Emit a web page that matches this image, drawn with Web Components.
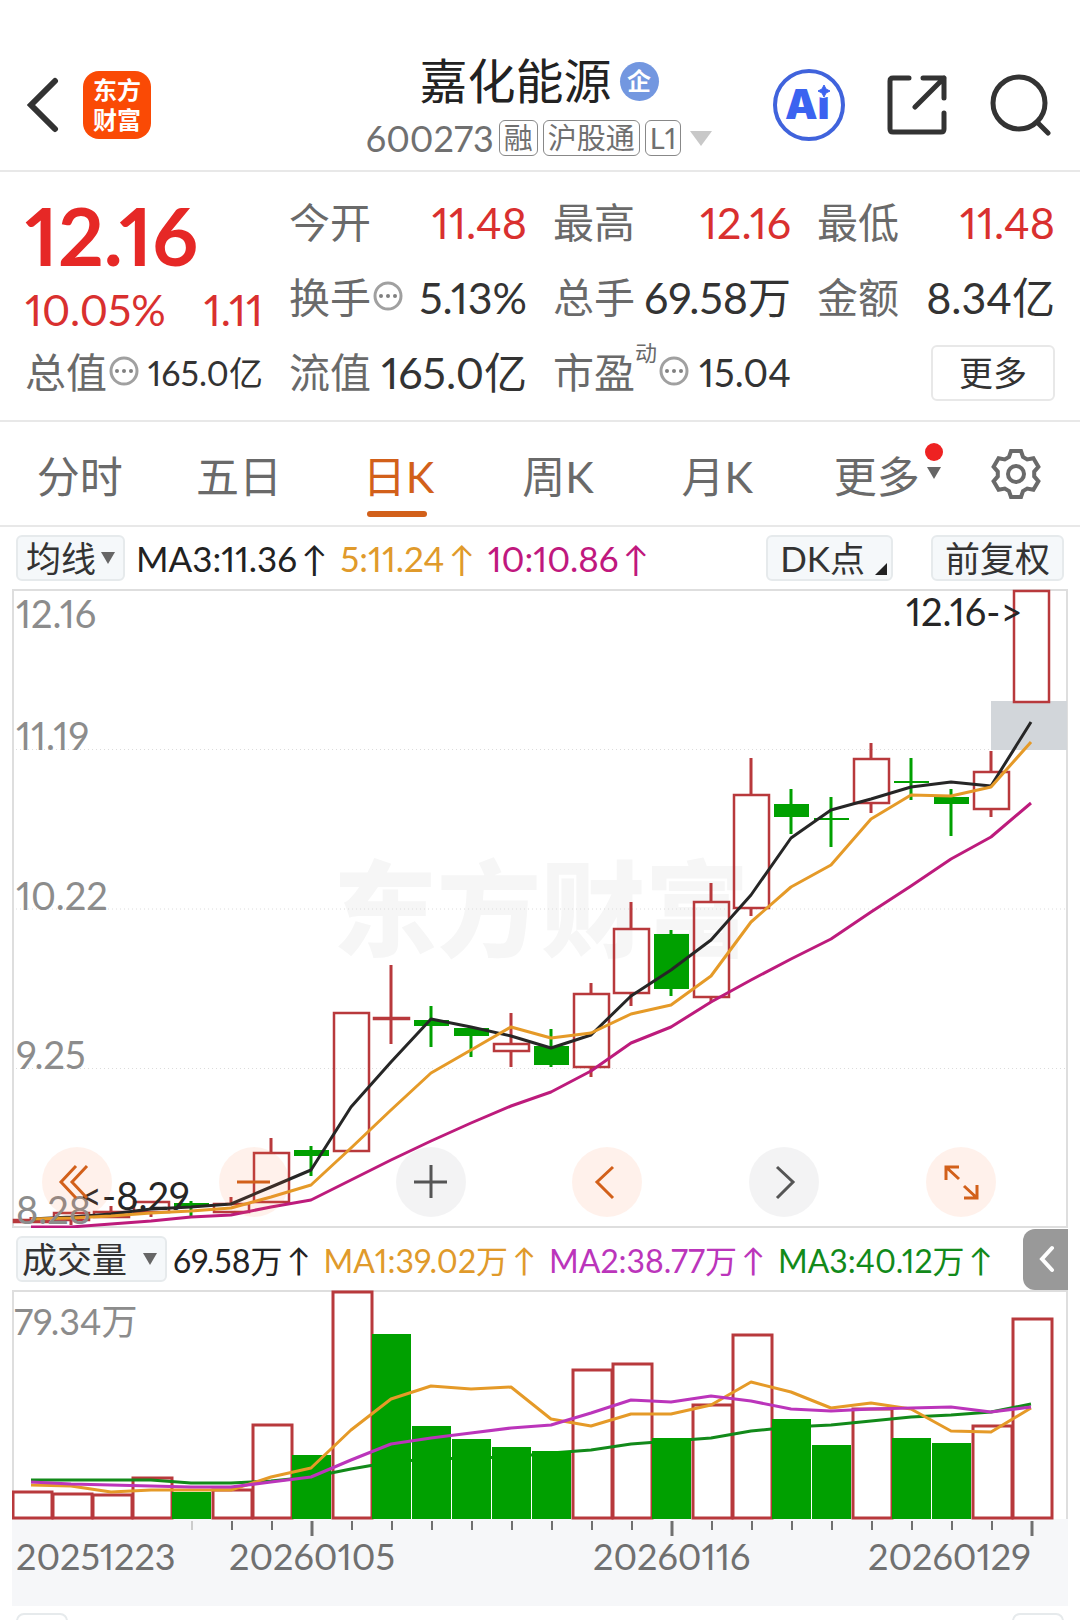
<!DOCTYPE html>
<html lang="zh-CN">
<head>
<meta charset="utf-8">
<meta name="viewport" content="width=device-width, initial-scale=1">
<title>嘉化能源 600273</title>
<style>
    body {
        margin: 0;
        background: #fff;
        color: #333;
        font-family: Lato, "Noto Sans CJK SC", sans-serif;
        font-feature-settings: "pnum";
    }
</style>
</head>
<body>
<stock-page></stock-page>

<script>
const RESET = `
    *, *::before, *::after { box-sizing: border-box; }
    button { margin: 0; padding: 0; border: 0; background: none; color: inherit; font: inherit; font-feature-settings: inherit; cursor: pointer; }
    a { color: inherit; text-decoration: none; }
    svg { display: block; flex: none; }
`;

class StockHeader extends HTMLElement {
    constructor() {
        super();
        this.attachShadow({ mode: 'open' });
    }

    connectedCallback() {
        this.shadowRoot.innerHTML = `
            <style>
                ${RESET}
                :host { display: block; border-bottom: 2px solid #e8e8e8; }
                header {
                    display: grid;
                    grid-template-columns: 1fr auto 1fr;
                    align-items: center;
                    height: 170px;
                    padding: 40px 29px 0 27px;
                }
                .left, .right, .name, .code { display: flex; align-items: center; }
                .left { gap: 24px; }
                .right { justify-content: flex-end; gap: 42px; }
                .logo {
                    width: 68px;
                    padding: 4px 0;
                    border-radius: 16px;
                    background: #fa4a05;
                    color: #fff;
                    font-size: 24px;
                    font-weight: 700;
                    line-height: 30px;
                    text-align: center;
                }
                .stock { padding-top: 8px; }
                h1 { margin: 0; font-size: 48px; font-weight: 400; line-height: 58px; color: #222; }
                .name { justify-content: center; gap: 8px; }
                .corp {
                    width: 39px;
                    height: 39px;
                    border-radius: 50%;
                    background: #7397e0;
                    color: #fff;
                    font-size: 24px;
                    font-weight: 700;
                    line-height: 38px;
                    text-align: center;
                }
                .code { gap: 5px; color: #707070; font-size: 36px; line-height: 56px; }
                .tag {
                    height: 36px;
                    padding: 0 4px;
                    border: 1px solid #888;
                    border-radius: 6px;
                    font-size: 29px;
                    line-height: 33px;
                }
                .code svg { margin-left: 4px; }
            </style>
            <header>
                <div class="left">
                    <a href="#back" aria-label="返回">
                        <svg width="32" height="56" viewBox="0 0 32 56" fill="none" stroke="#333" stroke-width="6" stroke-linecap="round"><path d="M28 4L4 28l24 24"/></svg>
                    </a>
                    <div class="logo">东方<br>财富</div>
                </div>
                <div class="stock">
                    <div class="name"><h1>嘉化能源</h1><span class="corp">企</span></div>
                    <div class="code">
                        <span>600273</span>
                        <span class="tag">融</span><span class="tag">沪股通</span><span class="tag">L1</span>
                        <svg width="22" height="15" viewBox="0 0 22 15"><path d="M0 0h22L11 15z" fill="#c8c8c8"/></svg>
                    </div>
                </div>
                <div class="right">
                    <button aria-label="AI">
                        <svg width="72" height="72" viewBox="0 0 72 72">
                            <circle cx="36" cy="36" r="34" fill="#fff" stroke="#4063dc" stroke-width="4"/>
                            <text x="12" y="50" font-family="Inter" font-size="41" font-weight="900" fill="#3b63f0">Ai</text>
                            <circle cx="50" cy="20" r="9" fill="#fff"/>
                            <path d="M51 16l2 4 4 2-4 2-2 4-2-4-4-2 4-2z" fill="#3b63f0" stroke="#3b63f0"/>
                        </svg>
                    </button>
                    <button aria-label="分享">
                        <svg width="60" height="60" viewBox="0 0 60 60" fill="none" stroke="#333" stroke-width="5" stroke-linecap="round" stroke-linejoin="round"><path d="M22 3H6q-3 0-3 3v48q0 3 3 3h48q3 0 3-3V38M36 3h21v20M57 3L28 32"/></svg>
                    </button>
                    <button aria-label="搜索">
                        <svg width="62" height="62" viewBox="0 0 62 62" fill="none" stroke="#333" stroke-width="5" stroke-linecap="round"><circle cx="30" cy="29" r="26"/><path d="M48 48l11 11"/></svg>
                    </button>
                </div>
            </header>
        `;
    }
}

class QuoteCell extends HTMLElement {
    constructor() {
        super();
        this.attachShadow({ mode: 'open' });
    }

    connectedCallback() {
        const note = this.getAttribute('note');
        this.shadowRoot.innerHTML = `
            <style>
                ${RESET}
                :host { display: flex; align-items: center; justify-content: space-between; height: 75px; white-space: nowrap; font-size: 43px; line-height: 75px; }
                :host([size="small"]) .value { font-size: 34px; }
                :host([size="medium"]) .value { font-size: 38px; }
                :host([up]) .value { color: #d9302f; }
                .label { display: flex; align-items: center; color: #6a6a6a; font-size: 41px; }
                .label svg { margin: 0 0 4px 2px; }
                sup { align-self: flex-start; font-size: 22px; line-height: 36px; }
            </style>
            <span class="label">
                <span>${this.getAttribute('label')}</span>
                ${note ? `<sup>${note}</sup>` : ''}
                ${this.hasAttribute('tip') ? `
                    <svg width="30" height="30" viewBox="0 0 30 30">
                        <circle cx="15" cy="15" r="13" fill="none" stroke="#a0a0a0" stroke-width="3"/>
                        <g fill="#808080"><circle cx="8" cy="15" r="2"/><circle cx="15" cy="15" r="2"/><circle cx="22" cy="15" r="2"/></g>
                    </svg>` : ''}
            </span>
            <span class="value"><slot></slot></span>
        `;
    }
}

class QuotePanel extends HTMLElement {
    constructor() {
        super();
        this.attachShadow({ mode: 'open' });
    }

    connectedCallback() {
        this.shadowRoot.innerHTML = `
            <style>
                ${RESET}
                :host { display: block; padding: 13px 25px 10px; border-bottom: 2px solid #e8e8e8; }
                .grid { display: grid; grid-template-columns: repeat(4, minmax(0, 1fr)); column-gap: 26px; }
                .last { grid-row: span 2; color: #d9302f; }
                .price { color: #e62826; font-size: 80px; font-weight: 700; line-height: 100px; }
                .change { display: flex; justify-content: space-between; font-size: 43px; line-height: 50px; }
                .more { align-self: center; justify-self: end; width: 124px; height: 56px; border: 2px solid #e8e8e8; border-radius: 6px; font-size: 34px; line-height: 50px; }
            </style>
            <div class="grid">
                <div class="last">
                    <div class="price">12.16</div>
                    <div class="change"><span>10.05%</span><span>1.11</span></div>
                </div>
                <quote-cell label="今开" up>11.48</quote-cell>
                <quote-cell label="最高" up>12.16</quote-cell>
                <quote-cell label="最低" up>11.48</quote-cell>
                <quote-cell label="换手" tip>5.13%</quote-cell>
                <quote-cell label="总手">69.58万</quote-cell>
                <quote-cell label="金额">8.34亿</quote-cell>
                <quote-cell label="总值" tip size="small">165.0亿</quote-cell>
                <quote-cell label="流值">165.0亿</quote-cell>
                <quote-cell label="市盈" note="动" tip size="medium">15.04</quote-cell>
                <button class="more">更多</button>
            </div>
        `;
    }
}

class PeriodTabs extends HTMLElement {
    constructor() {
        super();
        this.attachShadow({ mode: 'open' });
        this.state = { active: '日K' };
    }

    connectedCallback() {
        this.render();
    }

    render() {
        const tabs = ['分时', '五日', '日K', '周K', '月K'];
        this.shadowRoot.innerHTML = `
            <style>
                ${RESET}
                :host { display: block; border-bottom: 2px solid #e8e8e8; }
                nav { display: grid; grid-template-columns: repeat(6, 4fr) 3fr; height: 103px; padding-right: 4px; align-items: stretch; color: #6a6a6a; font-size: 43px; }
                button { position: relative; display: flex; align-items: center; justify-content: center; }
                .tab.active { color: #d2601a; }
                .tab.active::after { content: ""; position: absolute; left: 50%; bottom: 8px; width: 60px; height: 6px; margin-left: -32px; border-radius: 3px; background: #d2601a; }
                .marks { position: absolute; left: 50%; top: 21px; margin-left: 48px; display: flex; flex-direction: column; align-items: center; gap: 6px; }
            </style>
            <nav>
                ${tabs.map(t => `<button class="tab ${t === this.state.active ? 'active' : ''}" data-tab="${t}">${t}</button>`).join('')}
                <button>更多
                    <span class="marks">
                        <svg width="18" height="18" viewBox="0 0 18 18"><circle cx="9" cy="9" r="9" fill="#ee2222"/></svg>
                        <svg width="14" height="12" viewBox="0 0 14 12"><path d="M0 0h14L7 12z" fill="#666"/></svg>
                    </span>
                </button>
                <button aria-label="设置">
                    <svg width="52" height="52" viewBox="-26 -26 52 52" fill="none" stroke="#6a6a6a" stroke-width="4">
                        <path d="M-7-17L-5-23H5L7-17 11.2-14.6 17.4-15.8 22.4-7.2 18.2-2.4V2.4L22.4 7.2 17.4 15.8 11.2 14.6 7 17 5 23H-5L-7 17-11.2 14.6-17.4 15.8-22.4 7.2-18.2 2.4V-2.4L-22.4-7.2-17.4-15.8-11.2-14.6z"/>
                        <circle r="8"/>
                    </svg>
                </button>
            </nav>
        `;
        this.shadowRoot.querySelectorAll('.tab').forEach(tab => {
            tab.addEventListener('click', () => {
                this.state.active = tab.dataset.tab;
                this.render();
            });
        });
    }
}

class ChipButton extends HTMLElement {
    constructor() {
        super();
        this.attachShadow({ mode: 'open' });
    }

    connectedCallback() {
        const mark = this.getAttribute('mark');
        this.shadowRoot.innerHTML = `
            <style>
                ${RESET}
                :host { display: block; flex: none; }
                button { display: flex; align-items: center; gap: 5px; height: 46px; padding: 0 8px; border: 2px solid #e6eaec; border-radius: 6px; background: #f5f8fa; color: #333; font-size: 35px; line-height: 42px; white-space: nowrap; }
                :host([wide]) button { gap: 16px; padding: 0 8px 0 4px; }
                :host([roomy]) button { padding: 0 12px; }
                :host([mark="corner"]) button { gap: 10px; padding: 0 4px 0 12px; }
                .corner { align-self: flex-end; margin-bottom: 4px; }
            </style>
            <button>
                <slot></slot>
                ${mark === 'down' ? '<svg width="14" height="12" viewBox="0 0 14 12"><path d="M0 0h14L7 12z" fill="#666"/></svg>' : ''}
                ${mark === 'corner' ? '<svg class="corner" width="12" height="12" viewBox="0 0 12 12"><path d="M12 0v12H0z" fill="#222"/></svg>' : ''}
            </button>
        `;
    }
}

class LegendItem extends HTMLElement {
    constructor() {
        super();
        this.attachShadow({ mode: 'open' });
    }

    connectedCallback() {
        this.shadowRoot.innerHTML = `
            <style>
                :host { display: flex; align-items: center; gap: 4px; flex: none; white-space: nowrap; color: var(--line, #222); }
            </style>
            <span><slot></slot></span><span>↑</span>
        `;
    }
}

// Day k sits at x = 31 + 40k; prices and volumes below are canvas y values.
const X0 = 31;
const STEP = 40;
const RED = '#b8393c';
const GREEN = '#00a000';

// [up, high, body top, body bottom, low, volume top]
const DAYS = [
    [1, 1217, 1220, 1222, 1223, 1492],
    [1, 1213, 1213, 1220, 1225, 1494],
    [1, 1206, 1212, 1217, 1217, 1495],
    [1, 1202, 1202, 1212, 1217, 1478],
    [0, 1201, 1203, 1207, 1217, 1492],
    [1, 1197, 1204, 1212, 1212, 1490],
    [1, 1138, 1153, 1202, 1202, 1425],
    [0, 1146, 1150, 1156, 1176, 1455],
    [1, 1013, 1013, 1151, 1151, 1292],
    [1, 965, 1018, 1019, 1044, 1334],
    [0, 1006, 1020, 1026, 1047, 1426],
    [0, 1028, 1028, 1036, 1057, 1439],
    [1, 1013, 1044, 1051, 1067, 1447],
    [0, 1029, 1046, 1065, 1067, 1451],
    [1, 983, 994, 1067, 1077, 1370],
    [1, 902, 929, 993, 1006, 1364],
    [0, 930, 934, 989, 996, 1438],
    [1, 883, 902, 997, 1002, 1405],
    [1, 758, 795, 908, 916, 1335],
    [0, 789, 804, 817, 834, 1419],
    [0, 797, 818, 820, 847, 1445],
    [1, 743, 759, 803, 813, 1409],
    [0, 758, 781, 783, 800, 1438],
    [0, 789, 797, 804, 836, 1443],
    [1, 751, 772, 809, 817, 1426],
    [1, 590, 591, 702, 702, 1319]
];
const FALLING_VOLUME = [4, 7, 9, 10, 11, 12, 13, 16, 19, 20, 22, 23];

const PRICE_LINES = [
    ['#262626', [1219, 1217, 1214, 1209, 1207, 1204, 1187, 1170, 1107, 1062, 1019, 1027, 1036, 1048, 1035, 996, 970, 940, 895, 838, 810, 799, 787, 782, 786, 722]],
    ['#e59a28', [1219, 1218, 1216, 1213, 1211, 1208, 1197, 1185, 1148, 1110, 1073, 1050, 1027, 1038, 1033, 1014, 1005, 976, 922, 887, 865, 819, 795, 796, 787, 742]],
    ['#bd1b7c', [1227, 1227, 1224, 1221, 1217, 1215, 1207, 1200, 1180, 1160, 1141, 1123, 1106, 1092, 1071, 1043, 1027, 1002, 980, 959, 939, 912, 886, 859, 837, 803]]
];
const VOLUME_LINES = [
    ['#e59a28', [1485, 1486, 1492, 1490, 1490, 1490, 1477, 1468, 1430, 1399, 1386, 1389, 1387, 1419, 1426, 1414, 1414, 1405, 1382, 1392, 1408, 1403, 1409, 1431, 1432, 1408]],
    ['#bb35bb', [1482, 1484, 1485, 1486, 1487, 1487, 1482, 1477, 1460, 1444, 1438, 1433, 1428, 1425, 1413, 1400, 1402, 1396, 1401, 1409, 1411, 1409, 1408, 1407, 1412, 1407]]
];
const LONG_VOLUME_LINE = ['#128a1a', [1480, 1480, 1480, 1480, 1483, 1483, 1481, 1477, 1469, 1462, 1459, 1458, 1457, 1453, 1450, 1444, 1441, 1438, 1431, 1427, 1425, 1421, 1417, 1415, 1412, 1404]];

const dayX = k => X0 + STEP * k;

function drawLines(lines) {
    return lines.map(([color, ys]) => {
        const points = ys.map((y, k) => `${dayX(k)},${y}`).join(' ');
        return `<polyline points="${points}" fill="none" stroke="${color}" stroke-width="3" stroke-linejoin="round"/>`;
    }).join('');
}

function drawCandle([up, high, top, bottom, low], k) {
    const x = dayX(k);
    const color = up ? RED : GREEN;
    const wicks = `<path d="M${x} ${high}V${top}M${x} ${bottom}V${low}" stroke="${color}" stroke-width="3"/>`;
    if (up) {
        return wicks + `<rect x="${x - 17}" y="${top}" width="35" height="${bottom - top}" fill="none" stroke="${color}" stroke-width="2.5"/>`;
    }
    return wicks + `<rect x="${x - 17}" y="${top}" width="35" height="${bottom - top}" fill="${color}"/>`;
}

class PriceChart extends HTMLElement {
    constructor() {
        super();
        this.attachShadow({ mode: 'open' });
    }

    connectedCallback() {
        this.shadowRoot.innerHTML = `
            <style>
                ${RESET}
                :host { display: block; position: relative; margin: 0 12px; }
                svg.plot { width: 100%; height: auto; font-size: 38px; }
                .tools { position: absolute; left: 0; right: 0; bottom: 11px; display: flex; justify-content: space-between; padding: 0 72px 0 30px; }
                .tools button { width: 70px; height: 70px; border-radius: 50%; background: rgba(255, 120, 60, .1); color: #d2601a; }
                .tools button.gray { background: rgba(100, 100, 110, .08); color: #555; }
                .tools svg { width: 70px; height: 70px; fill: none; stroke: currentColor; stroke-width: 3; }
            </style>
            <svg class="plot" viewBox="12 589 1056 639">
                <text x="333" y="949" font-size="104" font-weight="900" fill="#f6f6f6">东方财富</text>
                <path d="M12 749.5H1067M12 909H1067M12 1068.5H1067" stroke="#dcdcdc" stroke-dasharray="1 3"/>
                <path d="M13 1227V590H1067V1227z" fill="none" stroke="#dedede" stroke-width="2"/>
                <rect x="991" y="701" width="76" height="49" fill="#d2d6da"/>
                ${DAYS.map(drawCandle).join('')}
                ${drawLines(PRICE_LINES)}
                <g fill="#8c8c8c">
                    <text x="16" y="628">12.16</text>
                    <text x="16" y="750">11.19</text>
                    <text x="16" y="910">10.22</text>
                    <text x="16" y="1069">9.25</text>
                    <text x="16" y="1224">8.28</text>
                </g>
                <g fill="#262626">
                    <text x="906" y="626">12.16-&gt;</text>
                    <text x="80" y="1210">&lt;-8.29</text>
                </g>
            </svg>
            <div class="tools">
                <button aria-label="最早"><svg viewBox="0 0 70 70"><path d="M34 19L19 35l15 16M45 19L30 35l15 16"/></svg></button>
                <button aria-label="缩小"><svg viewBox="0 0 70 70"><path d="M18 35h33"/></svg></button>
                <button class="gray" aria-label="放大"><svg viewBox="0 0 70 70"><path d="M18 35h33M35 18v33"/></svg></button>
                <button aria-label="左移"><svg viewBox="0 0 70 70"><path d="M41 20L25 35l16 16"/></svg></button>
                <button class="gray" aria-label="右移"><svg viewBox="0 0 70 70"><path d="M28 20l16 15-16 16"/></svg></button>
                <button aria-label="全屏"><svg viewBox="0 0 70 70"><path d="M33 20H20v13M20 20l13 12M38 51h13V38M51 51L38 39"/></svg></button>
            </div>
        `;
    }
}

class VolumeChart extends HTMLElement {
    constructor() {
        super();
        this.attachShadow({ mode: 'open' });
    }

    drawBar(k) {
        const x = dayX(k);
        const top = DAYS[k][5];
        if (FALLING_VOLUME.includes(k)) {
            return `<rect x="${x - 19}" y="${top}" width="39" height="${1519 - top}" fill="${GREEN}"/>`;
        }
        return `<rect x="${x - 18}" y="${top}" width="39" height="${1518 - top}" fill="none" stroke="${RED}" stroke-width="3"/>`;
    }

    drawTick(k) {
        const major = [7, 16, 25].includes(k);
        const color = k === 4 ? '#ccc' : '#707070';
        return `<path d="M${dayX(k) + 1} 1521v${major ? 15 : 9}" stroke="${color}" stroke-width="${major ? 3 : 2}"/>`;
    }

    connectedCallback() {
        const days = DAYS.map((d, k) => k);
        const rising = days.filter(k => !FALLING_VOLUME.includes(k));
        this.shadowRoot.innerHTML = `
            <style>
                ${RESET}
                :host { display: block; margin: 0 12px; }
                svg { width: 100%; height: auto; font-size: 36px; }
            </style>
            <svg viewBox="12 1290 1056 316">
                <rect x="12" y="1519" width="1056" height="87" fill="#f6f7f9"/>
                <path d="M13 1519V1291H1067V1519" fill="none" stroke="#dedede" stroke-width="2"/>
                ${rising.map(this.drawBar).join('')}
                ${drawLines([LONG_VOLUME_LINE])}
                ${FALLING_VOLUME.map(this.drawBar).join('')}
                ${drawLines(VOLUME_LINES)}
                ${days.slice(4).map(this.drawTick).join('')}
                <text x="14" y="1335" fill="#8c8c8c">79.34万</text>
                <g fill="#707070">
                    <text x="16" y="1570">20251223</text>
                    <text x="229" y="1570">20260105</text>
                    <text x="593" y="1570">20260116</text>
                    <text x="868" y="1570">20260129</text>
                </g>
            </svg>
        `;
    }
}

class StockPage extends HTMLElement {
    constructor() {
        super();
        this.attachShadow({ mode: 'open' });
    }

    connectedCallback() {
        this.shadowRoot.innerHTML = `
            <style>
                ${RESET}
                :host { display: block; overflow: hidden; }
                .bar { display: flex; align-items: center; }
                .average { height: 62px; padding: 0 16px; gap: 11px; font-size: 35px; }
                .average .gap { flex: 1; }
                .bar .legend { display: flex; gap: 13px; }
                .average chip-button + chip-button { margin-left: 27px; }
                .volume { height: 62px; padding: 0 12px 0 16px; gap: 6px; font-size: 32px; }
                .volume .legend { flex: 1; }
                .drawer { flex: none; width: 45px; height: 61px; padding-left: 16px; border-radius: 12px 0 0 12px; background: #999; }
                .orange { --line: #e09a2b; }
                .magenta { --line: #c0187e; }
                .purple { --line: #bb35bb; }
                .green { --line: #128a1a; }
                footer { display: flex; justify-content: space-between; height: 14px; padding: 7px 16px 0; overflow: hidden; }
                footer span { width: 52px; height: 46px; border: 2px solid #e6eaec; border-radius: 8px; }
            </style>
            <stock-header></stock-header>
            <quote-panel></quote-panel>
            <period-tabs></period-tabs>
            <div class="bar average">
                <chip-button mark="down">均线</chip-button>
                <div class="legend">
                    <legend-item>MA3:11.36</legend-item>
                    <legend-item class="orange">5:11.24</legend-item>
                    <legend-item class="magenta">10:10.86</legend-item>
                </div>
                <span class="gap"></span>
                <chip-button mark="corner">DK点</chip-button>
                <chip-button roomy>前复权</chip-button>
            </div>
            <price-chart></price-chart>
            <div class="bar volume">
                <chip-button mark="down" wide>成交量</chip-button>
                <div class="legend">
                    <legend-item>69.58万</legend-item>
                    <legend-item class="orange">MA1:39.02万</legend-item>
                    <legend-item class="purple">MA2:38.77万</legend-item>
                    <legend-item class="green">MA3:40.12万</legend-item>
                </div>
                <button class="drawer" aria-label="展开"><svg width="16" height="28" viewBox="0 0 16 28" fill="none" stroke="#fff" stroke-width="4" stroke-linecap="round"><path d="M13 3L3 14l10 11"/></svg></button>
            </div>
            <volume-chart></volume-chart>
            <footer><span></span><span></span></footer>
        `;
    }
}

customElements.define('stock-header', StockHeader);
customElements.define('quote-cell', QuoteCell);
customElements.define('quote-panel', QuotePanel);
customElements.define('period-tabs', PeriodTabs);
customElements.define('chip-button', ChipButton);
customElements.define('legend-item', LegendItem);
customElements.define('price-chart', PriceChart);
customElements.define('volume-chart', VolumeChart);
customElements.define('stock-page', StockPage);
</script>
</body>
</html>
